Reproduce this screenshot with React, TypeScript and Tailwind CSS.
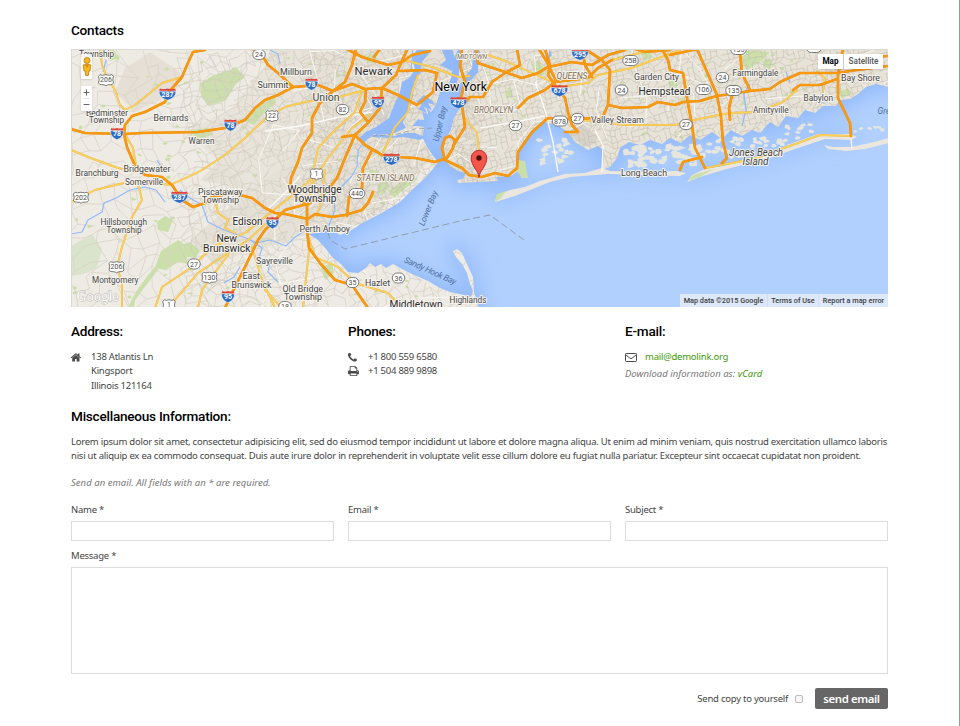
import React from "react";

type Pt = [number, number];

const LAND_WEST =
  "M60 40L458 40L458 49L454 58L451 78L447 88L440 92L436 104L431 112L426 106L428 114L422 111L424 120L418 119L412 126L424 127L422 137L427 147L433 156L438 162L433 169L425 178L412 190L400 202L390 208L380 214L362 223L350 231L340 235L332 230L326 224L322 232L308 234L318 240L326 249L333 258L341 264L348 272L358 273L366 268L370 263L375 267L381 264L386 268L393 264L402 269L412 274L428 281L440 288L450 292L464 295L471 297L473 291L470 284L467 273L462 264L456 257L453 251L457 249L462 253L467 264L473 277L474 292L480 312L60 312Z";
const LAND_EAST =
  "M461 40L459 75L456 88L462 94L460 108L454 118L451 130L444 142L443 157L450 166L458 171L466 173L463 179L457 180L458 183L498 181L496 177L511 176L518 171L516 161L519 152L527 140L532 131L545 122L557 125L568 132L575 142L588 150L598 146L604 150L603 166L598 171L610 167L617 158L620 148L629 142L640 145L650 140L662 144L670 138L681 143L690 135L700 140L712 132L722 139L731 130L742 136L752 130L760 133L770 122L778 127L786 116L798 118L805 110L815 113L823 106L836 106L840 100L850 99L858 94L866 87L876 84L889 87L890 40Z";
const BARRIERS = [
  "M495 202L497 195L510 190L525 187L540 181L565 174L585 173L602 168L610 171L640 172L676 171L686 173L680 176L640 175L608 174L570 177L550 182L535 188L515 196Z",
  "M687 182L692 175L705 169L723 166L750 158L770 153L790 144L818 134L850 134L857 137L851 140L825 139L795 149L770 158L723 170L700 177Z",
  "M824 145L832 147L851 147L870 143L889 138L889 143L865 149L846 151L828 149Z",
];

const INLETS = [
  "M418 48L412 57L415 70L409 78L402 82L399 96L396 100L389 118L376 127L366 132L358 139L364 142L374 134L392 134L406 128L403 122L409 110L413 96L414 82L420 74L422 62L430 52L430 48Z",
  "M425 137L415 133L405 133L394 136L376 134L372 137L390 138L404 137L420 140Z",
  "M441 48L446 60L440 65L452 71L455 60L452 48Z",
  "M478 49L482 55L478 62L478 72L471 80L464 88L461 94L457 88L464 78L472 68L474 49Z",
  "M424 95L432 101L435 105L428 103L432 110L424 107L427 113L418 109L422 105L416 102Z",
  "M549 48L552 55L547 61L550 48Z",
];

const GREENS = [
  "M200 84L212 76L230 70L236 67L245 77L236 84L226 100L208 106L201 96Z",
  "M245 121L258 107L275 96L276 103L263 114L254 125Z",
  "M161 251L172 244L178 240L184 244L190 242L200 250L196 258L187 257L188 264L178 262L166 270L155 268L158 259Z",
  "M388 191L398 184L412 176L418 179L406 188L394 198Z",
  "M377 185L386 180L390 187L380 196Z",
  "M518 160L525 161L528 178L522 178L516 170Z",
  "M495 202L497 194L506 191L501 198Z",
  "M688 181L693 175L714 169L700 177Z",
  "M739 54L750 50L770 52L760 62L746 70Z",
  "M762 61L770 58L774 66L766 70Z",
  "M532 64L540 60L545 74L537 77Z",
  "M505 92L512 90L513 97L506 98Z",
  "M321 268L332 262L334 273L325 280Z",
  "M365 57L375 53L377 63L368 63Z",
  "M103 52L113 49L120 58L110 61Z",
  "M157 222L165 216L173 220L168 232L158 230Z",
  "M128 307L136 292L148 275L160 262L158 270L144 288L135 300L134 307Z",
  "M190 130L208 128L213 135L197 139Z",
  "M640 52L650 49L652 58L644 61Z",
  "M668 80L676 77L678 86L670 88Z",
  "M838 92L848 88L852 94L842 98Z",
];

const ORANGE = [
  "M205 50L193 52L187 65L182 77L168 93L165 102L145 112L132 116L125 125L124 134L127 147L135 166L145 175L162 177L172 185L182 200L193 207L205 203L212 197L232 193L252 198L265 208L275 213L285 214L308 219L315 214L332 217L345 215L362 210L368 203L373 192",
  "M71 129L85 133L125 134L142 133L198 132L225 128L245 120L255 108L265 100L278 95L293 87L318 85L333 91L352 84L365 89L382 88L398 95L417 105L433 92L437 73L425 70L400 71",
  "M253 49L260 52L268 65L278 73L293 87",
  "M345 48L362 57L388 65L402 62L412 55L430 51",
  "M356 49L352 65L345 82L333 91L320 103L312 118L312 133L302 148L298 162L291 178L290 190L298 199L307 205",
  "M380 49L374 57",
  "M408 48L400 65L396 75L382 88L380 108L368 123L355 135L345 158L337 178L322 197L307 204L285 210L265 230L258 240L245 267L232 293L225 308",
  "M366 90L365 102L360 112L368 122",
  "M342 137L355 135L365 145L382 155L398 157L415 158L435 162L447 158L453 148L455 140L450 136L445 138L442 148L445 160L462 168L469 175L482 177L495 173L508 176L517 168L518 152L532 132L548 118L565 119L602 118L608 105",
  "M453 146L465 127L462 105L470 97L483 97L492 82L505 73L520 65L517 49",
  "M478 63L505 72L522 78L538 73L548 67L572 62L592 65L608 55L625 50",
  "M478 63L476 50M462 49L460 66L465 82L461 98",
  "M545 49L550 65L548 75L555 85L565 98L568 112L572 125L578 132L565 132",
  "M539 49L547 62L556 81",
  "M518 108L528 98L545 90L555 82L588 78L598 68L612 60",
  "M582 49L585 65L592 77M588 51L602 60L610 70L608 105L622 108L648 107L658 102L675 105L683 102L700 101L717 96L750 91L770 89L780 82L800 73L837 73L857 70L888 66",
  "M635 49L645 52L670 50M670 55L697 49",
  "M662 49L668 60L670 70L683 73L687 98L692 125L695 148L705 168M680 170L683 162L702 157",
  "M697 49L707 72L717 95L721 117L723 142L727 158L722 163",
  "M740 53L742 73L750 90M732 95L729 108L730 120",
  "M843 49L838 75L838 98L850 123L851 136",
  "M793 90L800 85L820 85L837 79M862 58L888 56",
  "M307 206L307 230L309 248L320 263L335 280L352 285L368 308",
  "M372 150L363 168L362 188L349 197L347 216",
];

const YELLOW = [
  "M100 49L102 65L107 78L115 90L120 105L125 110L135 105L145 97L162 83L182 77",
  "M125 134L133 148L136 165",
  "M71 150L88 157L118 168L135 172",
  "M172 184L188 177L202 170L225 155L245 138L265 119L285 107L305 102L335 98L365 90",
  "M71 202L95 190L128 182L145 182L172 185",
  "M137 180L142 200L132 217L122 247L117 267L122 283L122 308",
  "M155 308L162 287L192 267L212 247L245 233L275 209L299 190L312 178",
  "M168 308L198 273L225 255L248 240L270 220",
  "M198 308L202 290L222 263L228 255",
  "M252 247L262 280L275 308",
  "M215 200L218 213L228 220L225 228L235 233",
  "M362 90L355 112L332 133L318 148L312 178L309 205",
  "M370 115L352 128L328 158L315 178L309 200",
  "M418 75L412 92L408 112L395 127L388 142L383 152",
  "M403 60L432 67L458 77L470 76",
  "M488 55L508 62L532 73L552 82",
  "M465 118L477 133L479 152L479 176",
  "M559 87L588 83L598 75L632 68L680 50M612 60L655 49",
  "M582 120L625 125L675 125L703 118L730 113L757 112L783 102L797 90",
  "M705 168L753 159L787 147L820 135L850 136",
  "M817 72L825 78L823 92",
  "M307 233L315 257L338 267L355 283L388 293L402 308",
  "M309 250L303 308",
  "M265 290L282 308",
  "M325 170L320 205L317 216",
];

const RIVERS = [
  "M71 234L82 232L88 220L102 212L104 203L116 198L130 190L145 187L156 190L165 202",
  "M180 190L190 198L202 205L208 222L222 229L235 234L246 238L256 243L270 240L286 246L294 238L303 232",
  "M252 241L262 248L259 258L270 262L268 272L278 282",
  "M366 140L358 150L357 166L352 176L341 187L333 196L335 210L330 222L326 236",
  "M106 60L103 72M157 160L163 170M224 283L234 277L240 267",
  "M750 84L744 94L746 110L742 126M786 72L790 82M822 84L824 104",
  "M270 50L278 54L280 64M413 49L411 70",
];

// Small deterministic generator, so street meshes are identical on every render.
function rng(seed: number) {
  let s = seed;
  return () => {
    s = (s * 16807) % 2147483647;
    return s / 2147483647;
  };
}

function mesh(x0: number, x1: number, y0: number, y1: number, step: number, jitter: number, keep: number, seed: number, skew: number) {
  const r = rng(seed);
  const cols = Math.ceil((x1 - x0) / step) + 1;
  const rows = Math.ceil((y1 - y0) / step) + 1;
  const p: Pt[][] = [];
  for (let j = 0; j < rows; j++) {
    p.push([]);
    for (let i = 0; i < cols; i++) {
      p[j].push([
        x0 + i * step + (r() - 0.5) * jitter + ((j * step * skew) % step),
        y0 + j * step + (r() - 0.5) * jitter - ((i * step * skew) % step),
      ]);
    }
  }
  let d = "";
  const seg = (a: Pt, b: Pt) => {
    d += `M${a[0].toFixed(1)} ${a[1].toFixed(1)}L${b[0].toFixed(1)} ${b[1].toFixed(1)}`;
  };
  for (let j = 0; j < rows; j++)
    for (let i = 0; i < cols; i++) {
      if (i + 1 < cols && r() < keep) seg(p[j][i], p[j][i + 1]);
      if (j + 1 < rows && r() < keep) seg(p[j][i], p[j + 1][i]);
    }
  return d;
}

function specks(list: [number, number, number, number, number, number][], seed: number) {
  const r = rng(seed);
  let d = "";
  for (const [x0, y0, x1, y1, n, size] of list)
    for (let i = 0; i < n; i++) {
      const x = x0 + r() * (x1 - x0);
      const y = y0 + r() * (y1 - y0);
      const k = 6;
      for (let a = 0; a < k; a++) {
        const rad = size * (0.45 + r() * 0.8);
        const t = (a / k) * Math.PI * 2;
        d += `${a ? "L" : "M"}${(x + Math.cos(t) * rad * 1.2).toFixed(1)} ${(y + Math.sin(t) * rad * 0.8).toFixed(1)}`;
      }
      d += "Z";
    }
  return d;
}

const STREETS_SPARSE = mesh(66, 270, 44, 310, 14, 11, 0.78, 77, 0.3);
const STREETS_MID = mesh(180, 470, 60, 310, 8, 6, 0.72, 913, 0.35);
const STREETS_DENSE = mesh(300, 470, 44, 220, 6, 3, 0.75, 4401, 0.4);
const STREETS_ISLAND = mesh(455, 890, 44, 186, 5.5, 2, 0.78, 1207, 0.25);
const STREETS_WHITE = mesh(260, 890, 44, 300, 22, 16, 0.28, 555, 0.2);
const ISLETS = specks([[540, 138, 572, 164, 17, 3.4], [625, 146, 706, 166, 62, 3.5], [706, 138, 740, 158, 16, 3], [740, 138, 790, 148, 18, 2.8], [786, 125, 815, 138, 10, 2.6], [855, 125, 884, 132, 6, 2.2]], 31);
const SMALL_GREENS = specks([[75, 55, 270, 300, 46, 2.2], [270, 55, 440, 130, 22, 1.9], [310, 150, 420, 210, 12, 2.4], [470, 55, 870, 120, 46, 2.2], [310, 275, 440, 305, 7, 2], [640, 128, 700, 138, 8, 2]], 91);

type Label = [string, number, number, number, number, "i"?];
const LABELS: Label[] = [
  ["Township", 79, 57, 35, 8.8],
  ["Bedminster", 86, 115.5, 42, 8.8],
  ["Township", 89, 123, 35, 8.8],
  ["Bernards", 153.5, 121, 35, 8.8],
  ["Warren", 188.5, 143.5, 26, 8.8],
  ["Bridgewater", 123.5, 171.5, 47, 8.8],
  ["Branchburg", 75.5, 176, 43, 8.8],
  ["Somerville", 125, 184.5, 38, 8.8],
  ["Summit", 257.5, 88, 31, 8.8],
  ["Millburn", 280, 74.5, 32, 8.8],
  ["Newark", 354.5, 74.5, 38, 11.5],
  ["Union", 312.5, 100.5, 27, 10],
  ["New York", 434.5, 91, 52.5, 12.8],
  ["Garden City", 634, 80, 45, 9],
  ["Hempstead", 638.5, 94.5, 52, 10.5],
  ["Valley Stream", 591, 123, 53, 8.8],
  ["Long Beach", 621, 175.5, 46, 8.8],
  ["Farmingdale", 732.5, 75.5, 46, 8.8],
  ["Bay Shore", 841, 81, 39, 8.8],
  ["Babylon", 803.5, 101, 29.5, 8.8],
  ["Amityville", 753, 113, 35.5, 8.8],
  ["Jones Beach", 729, 155.5, 54, 10, "i"],
  ["Island", 742.5, 165, 26, 10, "i"],
  ["Piscataway", 198, 194.5, 44.5, 8.8],
  ["Township", 202, 202.5, 37, 8.8],
  ["Hillsborough", 100.5, 225, 46.5, 8.8],
  ["Township", 106.5, 233, 35, 8.8],
  ["Edison", 232.5, 224.5, 30, 10.3],
  ["New", 216.5, 241.5, 20.5, 10.3],
  ["Brunswick", 203, 251.5, 47.5, 10.3],
  ["Sayreville", 256, 264, 37, 8.8],
  ["East", 242.5, 279, 17.5, 8.8],
  ["Brunswick", 231.5, 288, 40, 8.8],
  ["Montgomery", 92, 283, 46.5, 8.8],
  ["Woodbridge", 287.5, 192.5, 54, 10.3],
  ["Township", 293, 201.8, 43.5, 10.3],
  ["Perth Amboy", 299.5, 232, 50.5, 8.8],
  ["Hazlet", 365, 285.5, 25, 8.8],
  ["Old Bridge", 282.5, 292, 40.5, 8.8],
  ["Township", 284, 300, 38, 8.8],
  ["Middletown", 389.5, 308, 53, 10.3],
  ["Highlands", 449.5, 302.5, 37, 8.8],
];
const BOROUGHS: Label[] = [
  ["MIDTOWN", 457, 59, 30, 7],
  ["QUEENS", 556.5, 79, 31, 8.3],
  ["BROOKLYN", 474, 113, 39, 8.3],
  ["STATEN ISLAND", 356.5, 181, 58, 8.3],
];

type Shield = [string, number, number];
const ROUTES: Shield[] = [
  ["24", 259, 54.5], ["82", 342.5, 109.5], ["25B", 630.5, 60.5], ["24", 621.5, 90], ["878", 560, 121],
  ["27", 577.5, 118.5], ["27", 515.5, 125.5], ["106", 703.5, 89.5], ["135", 733.5, 90.5], ["24", 722.5, 77.5],
  ["27", 686, 124.5], ["135", 738.5, 49.5], ["231", 814, 47.5], ["27", 194, 264], ["440", 357, 193.5], ["35", 352.5, 282.5],
  ["36", 398.5, 278], ["18", 285, 306.5],
];
const US_ROUTES: Shield[] = [
  ["22", 272, 116], ["206", 106, 80], ["1", 316.5, 174], ["202", 81, 197.5], ["206", 116.5, 267], ["130", 209.5, 277.5], ["1", 169, 305],
];
const INTERSTATES: Shield[] = [
  ["95", 378, 102], ["78", 117, 133.5], ["78", 230.5, 125], ["287", 167.5, 94], ["78", 311.5, 84], ["278", 391.5, 159],
  ["478", 458.5, 102.5], ["295", 580, 54], ["678", 559.5, 90.5], ["287", 179.5, 197], ["95", 228, 296.5], ["95", 272.5, 222.5],
];

function MapLabel({ l, fill }: { l: Label; fill: string }) {
  return (
    <text x={l[1]} y={l[2]} textLength={l[3]} lengthAdjust="spacingAndGlyphs" fontSize={l[4]} fill={fill} stroke="#f7f5f0" strokeWidth={1.8} strokeLinejoin="round" paintOrder="stroke" fontStyle={l[5] === "i" ? "italic" : undefined}>
      {l[0]}
    </text>
  );
}

function MapDrawing() {
  return (
    <svg className="block h-full w-full" viewBox="71 49 817 258" preserveAspectRatio="none" fontFamily="Roboto, 'Liberation Sans', sans-serif">
      <defs>
        <filter id="shore" x="-10%" y="-10%" width="120%" height="120%">
          <feGaussianBlur stdDeviation="10" />
        </filter>
        <clipPath id="land">
          <path d={LAND_WEST} />
          <path d={LAND_EAST} />
        </clipPath>
      </defs>
      <rect x="71" y="49" width="817" height="258" fill="#b1d0fe" />
      <g filter="url(#shore)" fill="#8fb7fa" stroke="#8fb7fa" strokeWidth="10">
        <path d={LAND_WEST} />
        <path d={LAND_EAST} />
        <path d={BARRIERS[0]} strokeWidth="3" />
        <path d={BARRIERS[1]} strokeWidth="3" />
      </g>
      <g fill="#ebe7df">
        <path d={LAND_WEST} fill="#eeebe5" />
        <path d={LAND_EAST} fill="#e8e3d9" />
        {BARRIERS.map((d) => (
          <path key={d} d={d} />
        ))}
        <path d={ISLETS} fill="#e6e6df" />
      </g>
      <g clipPath="url(#land)">
        <path d="M270 49L470 49L470 130L420 170L370 220L330 235L300 240L250 250L215 265L190 240L250 190L200 180L250 130Z" fill="#e6e1d7" />
        <path d="M115 92L125 68L150 52L180 72L182 80L160 100L135 112Z" fill="#e5dfd5" />
        <path d="M185 130L230 110L270 60L300 49L320 140L250 190Z" fill="#e8e4db" />
      </g>
      <g>
        <path d="M71 246L92 234L102 249L97 268L84 274L71 276Z" fill="#dae3cb" />
        {GREENS.map((d) => (
          <path key={d} d={d} fill="#cadfaa" />
        ))}
        <path d={SMALL_GREENS} fill="#c8dfa6" clipPath="url(#land)" />
        <path d="M366 97L382 98L384 108L390 112L384 124L374 117L365 118Z" fill="#d6d3cf" />
        <path d="M572 127L583 124L598 137L595 144L585 147L570 135Z" fill="#d8d3ca" />
      </g>
      <g clipPath="url(#land)" fill="none">
        <path d={STREETS_SPARSE} stroke="#d9d3c8" strokeWidth="0.8" />
        <path d={STREETS_MID} stroke="#d0cabc" strokeWidth="0.6" />
        <path d={STREETS_DENSE} stroke="#c7c0b1" strokeWidth="0.6" />
        <path d={STREETS_ISLAND} stroke="#c6bfb0" strokeWidth="0.6" />
        <path d={STREETS_WHITE} stroke="#faf9f6" strokeWidth="0.9" />
      </g>
      <g fill="#91b9f9">
        {INLETS.map((d) => (
          <path key={d} d={d} />
        ))}
      </g>
      <g fill="none" stroke="#91b9f9" strokeWidth="1.2" strokeLinejoin="round">
        {RIVERS.map((d) => (
          <path key={d} d={d} />
        ))}
      </g>
      <path d="M265 131L300 126L335 118L372 112M548 122L553 142L558 172M595 130L603 146L602 172M535 82L541 98L548 120M480 128L515 122L545 116M269 208L286 192L300 176" fill="none" stroke="#fbfaf8" strokeWidth="1.4" />
      <path d="M851 138L852 149" stroke="#f3f1ea" strokeWidth="1.5" />
      <path d="M328 232L330 240L345 249L460 221L490 215L524 240" fill="none" stroke="#8f979f" strokeWidth="0.9" strokeDasharray="7 3.5" />
      <path d="M372 136L398 134L415 129L434 128" fill="none" stroke="#8f979f" strokeWidth="0.8" strokeDasharray="5 3" />
      <g fill="none" strokeLinecap="round" strokeLinejoin="round">
        {YELLOW.map((d) => (
          <path key={d} d={d} stroke="#e3b54a" strokeWidth="1.9" />
        ))}
        {YELLOW.map((d) => (
          <path key={d} d={d} stroke="#fdd05a" strokeWidth="1.4" />
        ))}
        {ORANGE.map((d) => (
          <path key={d} d={d} stroke="#e98e10" strokeWidth="2.7" />
        ))}
        {ORANGE.map((d) => (
          <path key={d} d={d} stroke="#f8990f" strokeWidth="2" />
        ))}
      </g>
      <g fontSize="7" textAnchor="middle" fill="#4a4a4a">
        {ROUTES.map(([t, x, y]) => {
          const w = t.length > 2 ? 15.5 : 12.5;
          return (
            <g key={`${t}${x}`}>
              <rect x={x - w / 2} y={y - 5} width={w} height={10} rx={5} fill="#fff" stroke="#6d6d6d" strokeWidth="0.9" />
              <text x={x} y={y + 2.5}>{t}</text>
            </g>
          );
        })}
        {US_ROUTES.map(([t, x, y]) => {
          const h = t.length > 2 ? 7.5 : 6.2;
          return (
            <g key={`${t}${x}`}>
              <path d={`M${x - h + 1.5} ${y - 5.3}Q${x - h / 2} ${y - 4} ${x} ${y - 5.3}Q${x + h / 2} ${y - 4} ${x + h - 1.5} ${y - 5.3}L${x + h} ${y - 3.5}Q${x + h - 1.5} ${y} ${x + h} ${y + 3}Q${x + h - 1} ${y + 5} ${x + h - 3} ${y + 4.6}Q${x + 1} ${y + 4.6} ${x} ${y + 5.8}Q${x - 1} ${y + 4.6} ${x - h + 3} ${y + 4.6}Q${x - h + 1} ${y + 5} ${x - h} ${y + 3}Q${x - h + 1.5} ${y} ${x - h} ${y - 3.5}Z`} fill="#fff" stroke="#6d6d6d" strokeWidth="0.9" />
              <text x={x} y={y + 2.4}>{t}</text>
            </g>
          );
        })}
      </g>
      <g fontSize="7" fontWeight="700" textAnchor="middle" fill="#fff">
        {INTERSTATES.map(([t, x, y]) => {
          const h = t.length > 2 ? 8.4 : 6.4;
          return (
            <g key={`${t}${x}`}>
              <path d={`M${x - h} ${y - 2.8}H${x + h}Q${x + h + 0.4} ${y + 3.5} ${x} ${y + 6.3}Q${x - h - 0.4} ${y + 3.5} ${x - h} ${y - 2.8}Z`} fill="#2d6cc0" stroke="#fff" strokeWidth="0.5" />
              <path d={`M${x - h + 0.8} ${y - 5.6}Q${x - h / 2} ${y - 4.6} ${x} ${y - 5.6}Q${x + h / 2} ${y - 4.6} ${x + h - 0.8} ${y - 5.6}L${x + h} ${y - 3.2}H${x - h}Z`} fill="#e0453c" />
              <text x={x} y={y + 2.9}>{t}</text>
            </g>
          );
        })}
      </g>
      <g>
        {LABELS.map((l) => (
          <MapLabel key={`${l[0]}${l[1]}`} l={l} fill={l[4] > 12 ? "#000" : l[4] > 10 ? "#2b2b2b" : "#444"} />
        ))}
        <g fontStyle="italic">
          {BOROUGHS.map((l) => (
            <MapLabel key={l[0]} l={l} fill="#7d6a50" />
          ))}
        </g>
      </g>
      <g fontStyle="italic" fontSize="8.6" fill="#4f719f">
        <text transform="translate(438.5 142) rotate(-77)" textLength="36">Upper Bay</text>
        <text transform="translate(424 226.5) rotate(-68)" textLength="37">Lower Bay</text>
        <text transform="translate(403.5 262) rotate(24)" textLength="56">Sandy Hook Bay</text>
        <text x="877.5" y="114">Great</text>
      </g>
      <text x="76.5" y="300.5" fontSize="14" fontFamily="'Liberation Serif', serif" fill="#fff" stroke="#b9b6b0" strokeWidth="0.9" paintOrder="stroke" textLength="42">Google</text>
      <path d="M479 177.5C478.3 170 471.2 166.5 471.2 158A7.8 7.8 0 0 1 486.8 158C486.8 166.5 479.7 170 479 177.5Z" fill="#f3564c" stroke="#ad2b25" strokeWidth="0.9" />
      <circle cx="479" cy="158" r="2.7" fill="#4d0f0c" />
    </svg>
  );
}

function Pegman() {
  return (
    <svg className="h-5 w-[10px]" viewBox="0 0 10 20">
      <circle cx="5" cy="3.5" r="3" fill="#f5b51b" stroke="#bf7a12" strokeWidth="0.8" />
      <path d="M1.2 8Q5 6 8.8 8L8 14H6.8L6.3 18.5H3.7L3.2 14H2Z" fill="#f8b91c" stroke="#bf7a12" strokeWidth="0.8" />
      <path d="M3 8L5 11L7 8Z" fill="#d88916" />
    </svg>
  );
}

const HOME =
  "M1408 992v480q0 26-19 45t-45 19h-384v-384h-256v384h-384q-26 0-45-19t-19-45v-480q0-1 .5-3t.5-3l575-474 575 474q1 2 1 6zm223-69l-62 74q-8 9-21 11h-3q-13 0-21-7l-692-577-692 577q-12 8-24 7-13-2-21-11l-62-74q-8-10-7-23.5t11-21.5l719-599q32-26 76-26t76 26l244 204v-195q0-14 9-23t23-9h192q14 0 23 9t9 23v408l219 182q10 8 11 21.5t-7 23.5z";
const PHONE =
  "M1600 1240q0 27-10 70.5t-21 68.5q-21 50-122 106-94 51-186 51-27 0-53-3.5t-57.5-12.5-47-14.5-55.5-20.5-49-18q-98-35-175-83-127-79-264-216t-216-264q-48-77-83-175-3-9-18-49t-20.5-55.5-14.5-47-12.5-57.5-3.5-53q0-92 51-186 56-101 106-122 25-11 68.5-21t70.5-10q14 0 21 3 18 6 53 76 11 19 30 54t35 63.5 31 53.5q3 4 17.5 25t21.5 35.5 7 28.5q0 20-28.5 50t-62 55-62 53-28.5 46q0 9 5 22.5t8.5 20.5 14 24 11.5 19q76 137 174 235t235 174q2 1 19 11.5t24 14 20.5 8.5 22.5 5q18 0 46-28.5t53-62 55-62 50-28.5q14 0 28.5 7t35.5 21.5 25 17.5q25 15 53.5 31t63.5 35 54 30q70 35 76 53 3 7 3 21z";
const PRINT =
  "M448 1536h896v-256h-896v256zm0-640h896v-384h-160q-40 0-68-28t-28-68v-160h-640v640zm1152 64q0-26-19-45t-45-19-45 19-19 45 19 45 45 19 45-19 19-45zm128 0v416q0 13-9.5 22.5t-22.5 9.5h-224v160q0 40-28 68t-68 28h-960q-40 0-68-28t-28-68v-160h-224q-13 0-22.5-9.5t-9.5-22.5v-416q0-79 56.5-135.5t135.5-56.5h64v-544q0-40 28-68t68-28h672q40 0 88 20t76 48l152 152q28 28 48 76t20 88v256h64q79 0 135.5 56.5t56.5 135.5z";

function Glyph({ d, box, size }: { d: string; box: string; size: string }) {
  return (
    <svg className={size} viewBox={box} fill="#4a4a4a">
      <path d={d} />
    </svg>
  );
}

function Heading({ children }: { children: React.ReactNode }) {
  return (
    <h3 className="font-[Roboto,'Liberation_Sans',sans-serif] text-[13.6px] leading-4 font-medium tracking-[-0.25px] whitespace-nowrap text-black">{children}</h3>
  );
}

function Field({ label }: { label: string }) {
  return (
    <label className="block w-[263px] text-[#444]">
      <span className="block h-[18px] leading-[14px]">{label}</span>
      <input className="block h-5 w-full border border-[#dcdcdc] bg-white outline-none" />
    </label>
  );
}

export default function App() {
  return (
    <div className="h-[726px] w-[960px] overflow-hidden border-r border-[#84a689] bg-white font-['Noto_Sans','Open_Sans',sans-serif] text-[9.5px] leading-[14.4px] tracking-[-0.24px] text-[#444]">
      <div className="ml-[71px] w-[817px] pt-[22px]">
        <Heading>Contacts</Heading>

        <div className="relative mt-[11px] h-[258px] w-full overflow-hidden tracking-normal">
          <MapDrawing />
          <div className="pointer-events-none absolute inset-0 border-t border-l border-[#dcdad6]" />
          <div className="absolute top-[5px] left-[10px] flex h-[25px] w-[11px] items-center justify-center rounded-[1px] bg-white/85 shadow-sm">
            <Pegman />
          </div>
          <div className="absolute top-[37px] left-[10px] flex h-[25px] w-[11px] flex-col items-center rounded-[1px] bg-white shadow-sm">
            <svg className="h-[25px] w-[11px]" viewBox="0 0 11 25" stroke="#666" strokeWidth="1.1">
              <path d="M2.6 6.5H8.4M5.5 3.6V9.4M2.6 18.5H8.4" />
              <path d="M2 12.5H9" stroke="#ddd" strokeWidth="0.8" />
            </svg>
          </div>
          <div className="absolute top-[5px] right-[5px] flex h-[15px] bg-white font-[Roboto,sans-serif] text-[8.2px] leading-[15px] shadow-sm">
            <div className="w-[26px] border-r border-[#ccc] text-center font-bold text-black">Map</div>
            <div className="w-[39px] text-center font-medium text-[#565656]">Satellite</div>
          </div>
          <div className="absolute right-0 bottom-0 flex h-[13px] gap-px bg-[#cfdff7] font-[Roboto,sans-serif] text-[7.3px] leading-[13px] font-medium whitespace-nowrap text-[#3c3c3c]">
            <span className="w-[87px] bg-[#dde8f9] text-center">Map data ©2015 Google</span>
            <span className="w-[50px] bg-[#dde8f9] text-center">Terms of Use</span>
            <span className="w-[69px] bg-[#dde8f9] text-center">Report a map error</span>
          </div>
        </div>

        <div className="grid h-[85px] grid-cols-[263px_263px_263px] gap-x-[14px] pt-4">
          <div>
            <Heading>Address:</Heading>
            <div className="mt-[11px] flex">
              <div className="flex h-[14px] w-5 items-center"><Glyph d={HOME} box="64 200 1664 1400" size="h-[9px] w-[10.5px]" /></div>
              <div>138 Atlantis Ln<br />Kingsport<br />Illinois 121164</div>
            </div>
          </div>
          <div>
            <Heading>Phones:</Heading>
            <div className="mt-[11px] flex">
              <div className="flex h-[14px] w-5 items-center"><Glyph d={PHONE} box="192 256 1408 1280" size="h-[9px] w-[9px]" /></div>
              <span>+1 800 559 6580</span>
            </div>
            <div className="flex">
              <div className="flex h-[14px] w-5 items-center"><Glyph d={PRINT} box="64 128 1664 1536" size="h-[10px] w-[11px]" /></div>
              <span>+1 504 889 9898</span>
            </div>
          </div>
          <div>
            <Heading>E-mail:</Heading>
            <div className="mt-[11px] flex">
              <div className="flex h-[14px] w-5 items-center">
                <svg className="h-[9px] w-[12px]" viewBox="0 0 12 9" fill="none" stroke="#4a4a4a" strokeLinejoin="round">
                  <rect x="0.5" y="0.5" width="11" height="8" rx="0.8" />
                  <path d="M1 2L5 5.2Q6 6 7 5.2L11 2" />
                </svg>
              </div>
              <a className="text-[#3f9a0c]">mail@demolink.org</a>
            </div>
            <p className="mt-[3px] tracking-[0.02px] text-[#777] italic">Download information as: <a className="text-[#3f9a0c]">vCard</a></p>
          </div>
        </div>

        <div className="pt-4">
          <Heading>Miscellaneous Information:</Heading>
        </div>
        <p className="mt-[11px] whitespace-nowrap">
          Lorem ipsum dolor sit amet, consectetur adipisicing elit, sed do eiusmod tempor incididunt ut labore et dolore magna aliqua. Ut enim ad minim veniam, quis nostrud exercitation ullamco laboris
          <br />
          nisi ut aliquip ex ea commodo consequat. Duis aute irure dolor in reprehenderit in voluptate velit esse cillum dolore eu fugiat nulla pariatur. Excepteur sint occaecat cupidatat non proident.
        </p>
        <p className="mt-[12px] tracking-[0.04px] text-[#777] italic">Send an email. All fields with an * are required.</p>

        <form className="mt-[13px]">
          <div className="flex gap-[14px]">
            <Field label="Name *" />
            <Field label="Email *" />
            <Field label="Subject *" />
          </div>
          <label className="mt-[8px] block">
            <span className="block h-[18px] leading-[14px]">Message *</span>
            <textarea className="block h-[107px] w-full resize-none border border-[#dcdcdc] bg-white outline-none" />
          </label>
          <div className="mt-[14px] flex h-[21px] items-center justify-end">
            <span>Send copy to yourself</span>
            <span className="mr-[12px] ml-[7px] h-[8px] w-[8px] rounded-[2px] border border-[#bbb] bg-[#f7f7f7]" />
            <button type="button" className="h-[21px] w-[73px] rounded-[2px] bg-[#666] text-center text-[11.4px] leading-[20px] font-semibold tracking-[-0.4px] text-white">send email</button>
          </div>
        </form>
      </div>
    </div>
  );
}
